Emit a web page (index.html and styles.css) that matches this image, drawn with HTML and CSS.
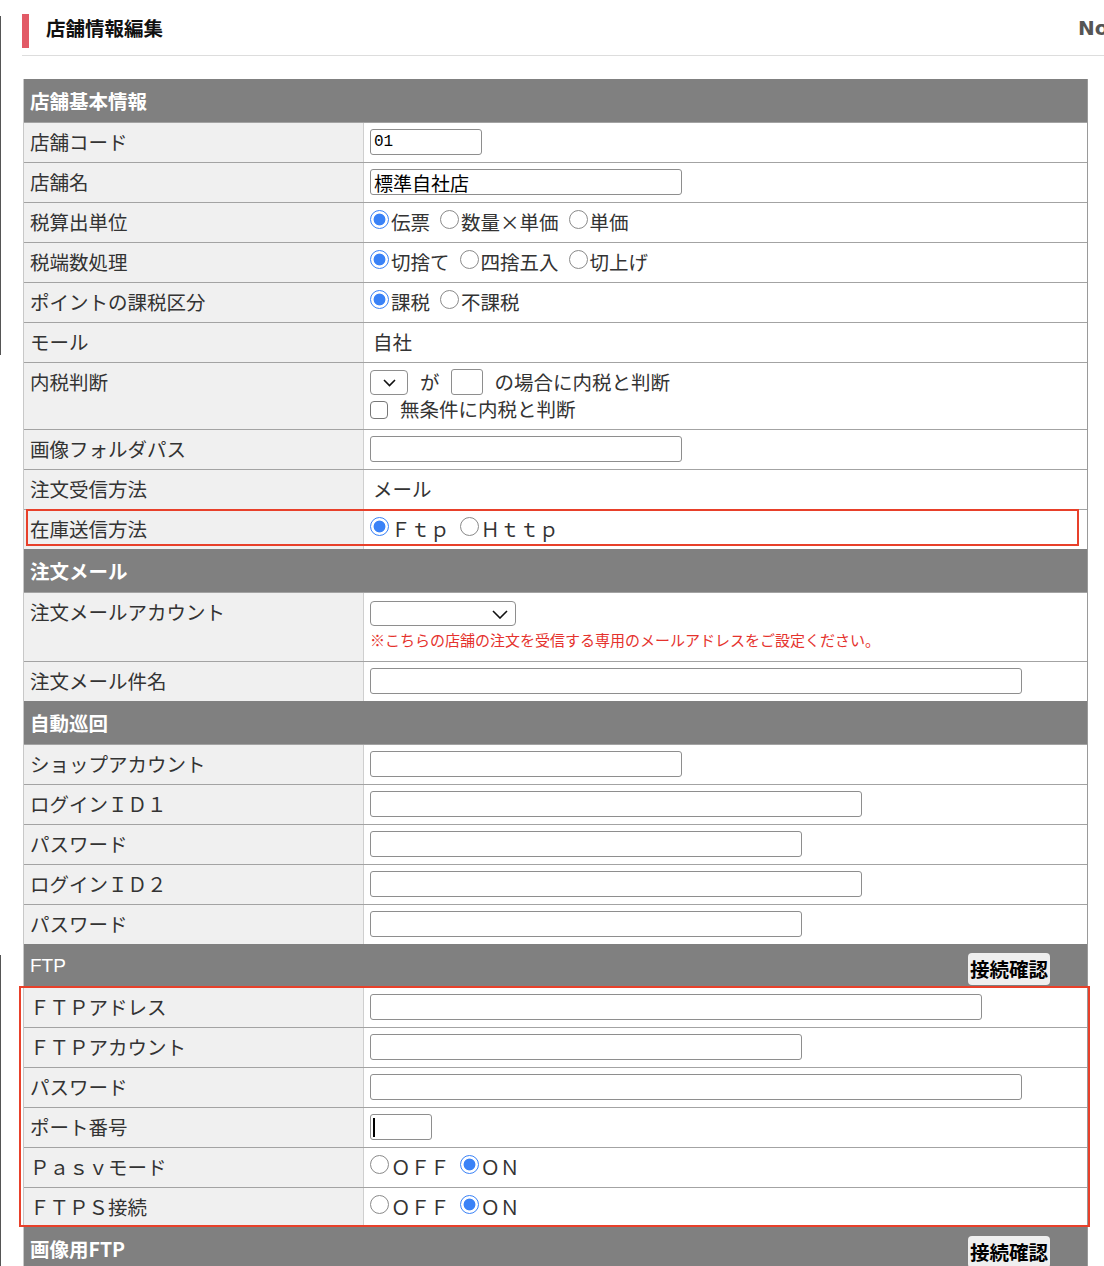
FILE: index.html
```html
<!DOCTYPE html>
<html lang="ja">
<head>
    <meta charset="UTF-8">
    <meta name="viewport" content="width=device-width, initial-scale=1.0">
    <title>店舗情報編集</title>
    <link rel="stylesheet" href="styles.css">
</head>
<body>
<div class="page">
    <div class="edge">
        <span class="edge-line edge-top"></span>
        <span class="edge-line edge-bottom"></span>
    </div>

    <div class="main">
        <div class="head">
            <h1 class="title">店舗情報編集</h1>
            <span class="head-no">No.</span>
        </div>

        <form class="shop-form">
            <div class="sec">店舗基本情報</div>
            <div class="row">
                <div class="label">店舗コード</div>
                <div class="val"><input type="text" class="inp inp-code" value="01"></div>
            </div>
            <div class="row">
                <div class="label">店舗名</div>
                <div class="val"><input type="text" class="inp inp-m inp-name" value="標準自社店"></div>
            </div>
            <div class="row">
                <div class="label">税算出単位</div>
                <div class="val opts">
                    <label class="opt"><input type="radio" name="taxunit" checked>伝票</label>
                    <label class="opt"><input type="radio" name="taxunit">数量×単価</label>
                    <label class="opt"><input type="radio" name="taxunit">単価</label>
                </div>
            </div>
            <div class="row">
                <div class="label">税端数処理</div>
                <div class="val opts">
                    <label class="opt"><input type="radio" name="taxround" checked>切捨て</label>
                    <label class="opt"><input type="radio" name="taxround">四捨五入</label>
                    <label class="opt"><input type="radio" name="taxround">切上げ</label>
                </div>
            </div>
            <div class="row">
                <div class="label">ポイントの課税区分</div>
                <div class="val opts">
                    <label class="opt"><input type="radio" name="pointtax" checked>課税</label>
                    <label class="opt"><input type="radio" name="pointtax">不課税</label>
                </div>
            </div>
            <div class="row">
                <div class="label">モール</div>
                <div class="val text">自社</div>
            </div>
            <div class="row">
                <div class="label">内税判断</div>
                <div class="val">
                    <div class="line">
                        <span class="sel-wrap">
                            <select class="sel sel-s"><option></option></select>
                            <svg class="chev" width="13" height="8" viewBox="0 0 13 8"><path d="M1 1l5.5 5.5L12 1" fill="none" stroke="#111" stroke-width="1.6"/></svg>
                        </span>
                        <span class="word">が</span>
                        <input type="text" class="inp inp-xs">
                        <span class="word">の場合に内税と判断</span>
                    </div>
                    <div class="line line-2">
                        <label class="check"><input type="checkbox">無条件に内税と判断</label>
                    </div>
                </div>
            </div>
            <div class="row">
                <div class="label">画像フォルダパス</div>
                <div class="val"><input type="text" class="inp inp-m"></div>
            </div>
            <div class="row">
                <div class="label">注文受信方法</div>
                <div class="val text">メール</div>
            </div>
            <div class="row">
                <div class="label">在庫送信方法</div>
                <div class="val opts">
                    <label class="opt"><input type="radio" name="stock" checked>Ｆｔｐ</label>
                    <label class="opt"><input type="radio" name="stock">Ｈｔｔｐ</label>
                </div>
            </div>

            <div class="sec">注文メール</div>
            <div class="row">
                <div class="label">注文メールアカウント</div>
                <div class="val">
                    <div class="line">
                        <span class="sel-wrap">
                            <select class="sel sel-l"><option></option></select>
                            <svg class="chev" width="16" height="9" viewBox="0 0 16 9"><path d="M1 1l7 7 7-7" fill="none" stroke="#111" stroke-width="1.6"/></svg>
                        </span>
                    </div>
                    <div class="note">※こちらの店舗の注文を受信する専用のメールアドレスをご設定ください。</div>
                </div>
            </div>
            <div class="row">
                <div class="label">注文メール件名</div>
                <div class="val"><input type="text" class="inp inp-xxl"></div>
            </div>

            <div class="sec">自動巡回</div>
            <div class="row">
                <div class="label">ショップアカウント</div>
                <div class="val"><input type="text" class="inp inp-m"></div>
            </div>
            <div class="row">
                <div class="label">ログインＩＤ１</div>
                <div class="val"><input type="text" class="inp inp-l"></div>
            </div>
            <div class="row">
                <div class="label">パスワード</div>
                <div class="val"><input type="password" class="inp inp-lm"></div>
            </div>
            <div class="row">
                <div class="label">ログインＩＤ２</div>
                <div class="val"><input type="text" class="inp inp-l"></div>
            </div>
            <div class="row">
                <div class="label">パスワード</div>
                <div class="val"><input type="password" class="inp inp-lm"></div>
            </div>

            <div class="sec sec-light">
                <span>FTP</span>
                <button type="button" class="btn">接続確認</button>
            </div>
            <div class="row">
                <div class="label">ＦＴＰアドレス</div>
                <div class="val"><input type="text" class="inp inp-xl"></div>
            </div>
            <div class="row">
                <div class="label">ＦＴＰアカウント</div>
                <div class="val"><input type="text" class="inp inp-lm"></div>
            </div>
            <div class="row">
                <div class="label">パスワード</div>
                <div class="val"><input type="password" class="inp inp-xxl"></div>
            </div>
            <div class="row">
                <div class="label">ポート番号</div>
                <div class="val">
                    <span class="caret-wrap">
                        <input type="text" class="inp inp-port">
                        <span class="caret"></span>
                    </span>
                </div>
            </div>
            <div class="row">
                <div class="label">Ｐａｓｖモード</div>
                <div class="val opts">
                    <label class="opt"><input type="radio" name="pasv">ＯＦＦ</label>
                    <label class="opt"><input type="radio" name="pasv" checked>ＯＮ</label>
                </div>
            </div>
            <div class="row">
                <div class="label">ＦＴＰＳ接続</div>
                <div class="val opts">
                    <label class="opt"><input type="radio" name="ftps">ＯＦＦ</label>
                    <label class="opt"><input type="radio" name="ftps" checked>ＯＮ</label>
                </div>
            </div>

            <div class="sec">
                <span>画像用FTP</span>
                <button type="button" class="btn">接続確認</button>
            </div>
            <div class="row">
                <div class="label">ＦＴＰアドレス</div>
                <div class="val"><input type="text" class="inp inp-xl"></div>
            </div>
            <div class="row">
                <div class="label">ＦＴＰアカウント</div>
                <div class="val"><input type="text" class="inp inp-lm"></div>
            </div>
        </form>
    </div>

    <!-- annotation boxes -->
    <div class="mark mark-stock"></div>
    <div class="mark mark-ftp"></div>
</div>
</body>
</html>
```

FILE: styles.css
```css
* {
    box-sizing: border-box;
}
html, body {
    margin: 0;
    padding: 0;
    background: #fff;
    overflow-x: hidden;
}
body {
    font-family: "Noto Sans CJK JP", "Noto Sans", sans-serif;
    font-size: 19.5px;
    color: #333;
}
.page {
    position: relative;
    display: flex;
}
.edge {
    width: 22px;
    flex: 0 0 22px;
    display: flex;
    flex-direction: column;
}
.edge-line {
    display: block;
    width: 1px;
    background: #555;
}
.edge-top {
    margin-top: 16px;
    height: 339px;
}
.edge-bottom {
    margin-top: 600px;
    height: 400px;
}
.main {
    flex: 1;
    min-width: 0;
}

/* page heading */
.head {
    display: flex;
    align-items: center;
    width: 1116px;
    margin-top: 14px;
    padding-bottom: 7px;
    border-bottom: 1px solid #ddd;
}
.title {
    margin: 0;
    height: 34px;
    line-height: 28px;
    border-left: 7px solid #e25a66;
    padding-left: 17px;
    font-size: 19.5px;
    font-weight: bold;
    color: #111;
}
.head-no {
    margin-left: auto;
    margin-bottom: 6px;
    flex: 0 0 60px;
    font-size: 20px;
    font-weight: bold;
    color: #555;
    line-height: 28px;
    font-family: "DejaVu Sans", sans-serif;
}

/* form table */
.shop-form {
    width: 1065px;
    margin: 23px 0 0 1px;
    border-left: 1px solid #c8c8c8;
    border-right: 1px solid #9a9a9a;
}
.sec {
    display: flex;
    align-items: center;
    justify-content: space-between;
    height: 43px;
    padding: 0 37px 0 6px;
    background: #808080;
    color: #fff;
    font-weight: bold;
}
.sec-light span {
    font-weight: normal;
    font-family: "Liberation Sans", sans-serif;
    font-size: 19px;
}
.btn {
    height: 32px;
    margin-top: 7px;
    padding: 0 2px;
    border: none;
    border-radius: 4px;
    background: #efefef;
    color: #000;
    font-family: "Noto Sans CJK JP", sans-serif;
    font-size: 19.5px;
    font-weight: bold;
    line-height: 32px;
}
.row {
    display: grid;
    grid-template-columns: 340px 1fr;
    border-top: 1px solid #a3a3a3;
}
.label {
    background: #f0f0f0;
    padding: 6px 6px 7px;
    line-height: 26px;
    border-right: 1px solid #cfcfcf;
    white-space: nowrap;
}
.val {
    padding: 6px 6px 7px;
    line-height: 26px;
}
.val.text {
    padding-left: 9px;
}

/* inputs */
.inp {
    display: inline-block;
    height: 26px;
    margin: 0;
    padding: 0 3px;
    border: 1px solid #8e8e8e;
    border-radius: 3px;
    background: #fff;
    vertical-align: top;
    font-family: "Noto Sans CJK JP", sans-serif;
    font-size: 19px;
    color: #000;
}
.inp-code {
    width: 112px;
    font-family: "Liberation Mono", monospace;
    font-size: 16px;
}
.inp-name {
    line-height: 24px;
}
.inp-xs { width: 32px; }
.inp-port { width: 62px; }
.inp-m { width: 312px; }
.inp-lm { width: 432px; }
.inp-l { width: 492px; }
.inp-xl { width: 612px; }
.inp-xxl { width: 652px; }

.caret-wrap {
    position: relative;
    display: inline-block;
    vertical-align: top;
}
.caret {
    position: absolute;
    left: 3px;
    top: 4px;
    width: 2px;
    height: 19px;
    background: #000;
}

.sel-wrap {
    position: relative;
    display: inline-block;
    vertical-align: top;
}
.sel {
    appearance: none;
    -webkit-appearance: none;
    display: block;
    height: 25px;
    margin: 1px 0 0;
    border: 1px solid #8e8e8e;
    border-radius: 4px;
    background: #fff;
}
.sel-s { width: 38px; }
.sel-l { width: 146px; margin-top: 2px; }
.chev {
    position: absolute;
    top: 10px;
    right: 12px;
    pointer-events: none;
}
.sel-l + .chev {
    top: 11px;
    right: 8px;
}

.line {
    display: flex;
    align-items: flex-start;
    height: 26px;
}
.line .word {
    margin-left: 12px;
    line-height: 26px;
}
.line .inp-xs {
    margin-left: 11px;
}
.line-2 {
    height: 27px;
    align-items: center;
}
.check {
    display: flex;
    align-items: center;
}
.check input {
    appearance: none;
    -webkit-appearance: none;
    width: 18px;
    height: 18px;
    margin: 2px 12px 0 0;
    border: 1px solid #777;
    border-radius: 4px;
    background: #fff;
}

.opts {
    display: flex;
    align-items: center;
    gap: 10px;
}
.opt {
    display: flex;
    align-items: center;
}
.opt input {
    appearance: none;
    -webkit-appearance: none;
    width: 19px;
    height: 19px;
    margin: 0 2px 6px 0;
    border: 1px solid #8a8a8a;
    border-radius: 50%;
    background: #fff;
}
.opt input:checked {
    border: 1.5px solid #3a82f7;
    background: radial-gradient(circle, #3a82f7 0 5.5px, #fff 6.3px);
}

.note {
    color: #e5322d;
    font-size: 15px;
    line-height: 29px;
}

/* red annotation boxes */
.mark {
    position: absolute;
    border: 2px solid #e8402a;
    pointer-events: none;
}
.mark-stock {
    left: 26px;
    top: 509px;
    width: 1053px;
    height: 37px;
}
.mark-ftp {
    left: 19px;
    top: 986px;
    width: 1071px;
    height: 241px;
}
```
